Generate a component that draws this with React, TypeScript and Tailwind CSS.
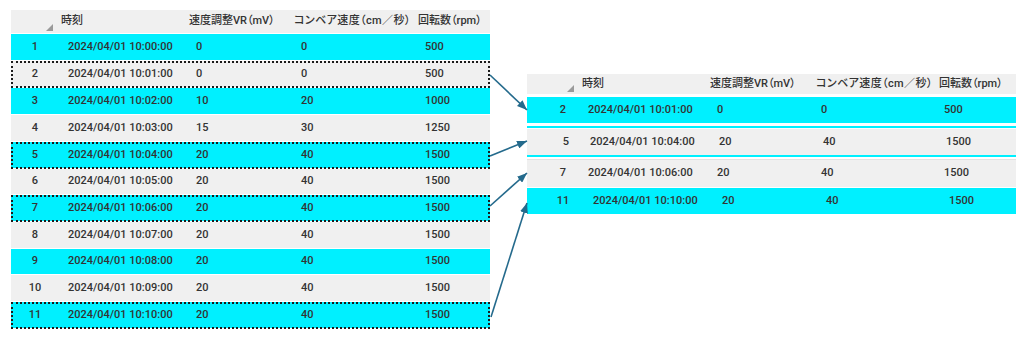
import React from "react";

type LRow = { n: string; t: string; a: string; b: string; c: string; h: string };

const leftRows: LRow[] = [
  { n: "1", t: "2024/04/01 10:00:00", a: "0", b: "0", c: "500", h: "h-[27px]" },
  { n: "2", t: "2024/04/01 10:01:00", a: "0", b: "0", c: "500", h: "h-[27px]" },
  { n: "3", t: "2024/04/01 10:02:00", a: "10", b: "20", c: "1000", h: "h-[27px]" },
  { n: "4", t: "2024/04/01 10:03:00", a: "15", b: "30", c: "1250", h: "h-[27px]" },
  { n: "5", t: "2024/04/01 10:04:00", a: "20", b: "40", c: "1500", h: "h-[27px]" },
  { n: "6", t: "2024/04/01 10:05:00", a: "20", b: "40", c: "1500", h: "h-[26px]" },
  { n: "7", t: "2024/04/01 10:06:00", a: "20", b: "40", c: "1500", h: "h-[27px]" },
  { n: "8", t: "2024/04/01 10:07:00", a: "20", b: "40", c: "1500", h: "h-[27px]" },
  { n: "9", t: "2024/04/01 10:08:00", a: "20", b: "40", c: "1500", h: "h-[26px]" },
  { n: "10", t: "2024/04/01 10:09:00", a: "20", b: "40", c: "1500", h: "h-[27px]" },
  { n: "11", t: "2024/04/01 10:10:00", a: "20", b: "40", c: "1500", h: "h-[27px]" },
];

const selected = new Set(["2", "5", "7", "11"]);

const font =
  "font-[Roboto,'Noto_Sans_CJK_JP',sans-serif] [font-feature-settings:'palt'] text-[11px] font-medium text-[#333]";

function SortTri() {
  return (
    <svg width="7" height="7" viewBox="0 0 7 7" className="block">
      <polygon points="7,0 7,7 0,7" fill="#9a9a9a" />
    </svg>
  );
}

function ConveyorHead() {
  return (
    <span className="tracking-[0.4px]">
      コンベア速度（cm
      <span className="[font-feature-settings:normal]">／</span>
      秒）
    </span>
  );
}

function LeftTable() {
  return (
    <div className="w-[479px] flex flex-col">
      <div className="h-[24px] bg-[#f0f0f0] border-b border-white flex items-stretch">
        <div className="w-[50px] flex items-end justify-end pr-[8px] pb-[2px]">
          <SortTri />
        </div>
        <div className="w-[128px] flex items-center">時刻</div>
        <div className="w-[105px] flex items-center">速度調整VR（mV）</div>
        <div className="w-[124px] flex items-center whitespace-nowrap">
          <ConveyorHead />
        </div>
        <div className="flex-1 flex items-center">回転数（rpm）</div>
      </div>
      {leftRows.map((r, i) => {
        const cyan = i % 2 === 0;
        const sel = selected.has(r.n);
        return (
          <div
            key={r.n}
            className={`${r.h} border-b border-white flex items-center ${
              cyan ? "bg-[#00f0ff]" : "bg-[#f0f0f0]"
            } ${sel ? "outline-2 outline-dotted outline-[#1a1a1a] -outline-offset-2" : ""}`}
          >
            <div className="w-[48px] text-center">{r.n}</div>
            <div className="w-[128px] pl-[9px]">{r.t}</div>
            <div className="w-[105px] pl-[9px]">{r.a}</div>
            <div className="w-[124px] pl-[9px]">{r.b}</div>
            <div className="flex-1 pl-[9px]">{r.c}</div>
          </div>
        );
      })}
    </div>
  );
}

type RRow = { n: string; t: string; a: string; b: string; c: string; cls: string; numPad: string };

function RightRow({ r }: { r: RRow }) {
  return (
    <div className={`flex items-center ${r.cls}`}>
      <div className={`w-[61px] ${r.numPad}`}>
        <div className="w-[18px] text-center">{r.n}</div>
      </div>
      <div className="w-[129px]">{r.t}</div>
      <div className="w-[104px]">{r.a}</div>
      <div className="w-[123px]">{r.b}</div>
      <div className="flex-1">{r.c}</div>
    </div>
  );
}

function RightTable() {
  const r2: RRow = { n: "2", t: "2024/04/01 10:01:00", a: "0", b: "0", c: "500", cls: "h-[26px] bg-[#00f0ff]", numPad: "pl-[27px]" };
  const r5: RRow = { n: "5", t: "2024/04/01 10:04:00", a: "20", b: "40", c: "1500", cls: "h-[26px] bg-[#f0f0f0] pl-[2px]", numPad: "pl-[28px]" };
  const r7: RRow = { n: "7", t: "2024/04/01 10:06:00", a: "20", b: "40", c: "1500", cls: "h-[28px] bg-[#f0f0f0] border-t border-[#e2e2e2]", numPad: "pl-[27px]" };
  const r11: RRow = { n: "11", t: "2024/04/01 10:10:00", a: "20", b: "40", c: "1500", cls: "h-[26px] bg-[#00f0ff] pl-[5px]", numPad: "pl-[22px]" };
  return (
    <div className="w-[489px] mt-[64px] ml-[37px] flex flex-col">
      <div className="h-[20px] bg-[#f0f0f0] flex items-stretch">
        <div className="w-[55px] flex items-end justify-end pr-[8px] pb-[2px]">
          <SortTri />
        </div>
        <div className="w-[128px] flex items-center">時刻</div>
        <div className="w-[106px] flex items-center">速度調整VR（mV）</div>
        <div className="w-[123px] flex items-center whitespace-nowrap">
          <ConveyorHead />
        </div>
        <div className="flex-1 flex items-center">回転数（rpm）</div>
      </div>
      <div className="h-[3px] bg-white" />
      <RightRow r={r2} />
      <div className="h-[3px] bg-white" />
      <div className="h-[2px] bg-[#00f0ff]" />
      <div className="h-[1px] bg-white" />
      <RightRow r={r5} />
      <div className="h-[2px] bg-[#00f0ff]" />
      <div className="h-[2px] bg-white" />
      <RightRow r={r7} />
      <div className="h-[1px] bg-white" />
      <RightRow r={r11} />
    </div>
  );
}

function Arrows() {
  const c = "#246a8c";
  const lines = [
    [490, 75, 527, 110],
    [490, 156, 527, 141],
    [490, 206, 527, 173],
    [491, 317, 527, 203],
  ];
  return (
    <svg className="absolute inset-0 pointer-events-none" width="1024" height="342">
      <defs>
        <marker
          id="ah"
          markerUnits="userSpaceOnUse"
          markerWidth="10"
          markerHeight="8"
          refX="10"
          refY="4"
          orient="auto"
        >
          <path d="M0,0 L10,4 L0,8 z" fill={c} />
        </marker>
      </defs>
      {lines.map(([x1, y1, x2, y2], i) => (
        <line
          key={i}
          x1={x1}
          y1={y1}
          x2={x2}
          y2={y2}
          stroke={c}
          strokeWidth="1.6"
          markerEnd="url(#ah)"
        />
      ))}
    </svg>
  );
}

export default function App() {
  return (
    <div className={`relative w-[1024px] h-[342px] bg-white overflow-hidden ${font}`}>
      <div className="flex items-start pt-[10px] pl-[11px]">
        <LeftTable />
        <RightTable />
      </div>
      <Arrows />
    </div>
  );
}
